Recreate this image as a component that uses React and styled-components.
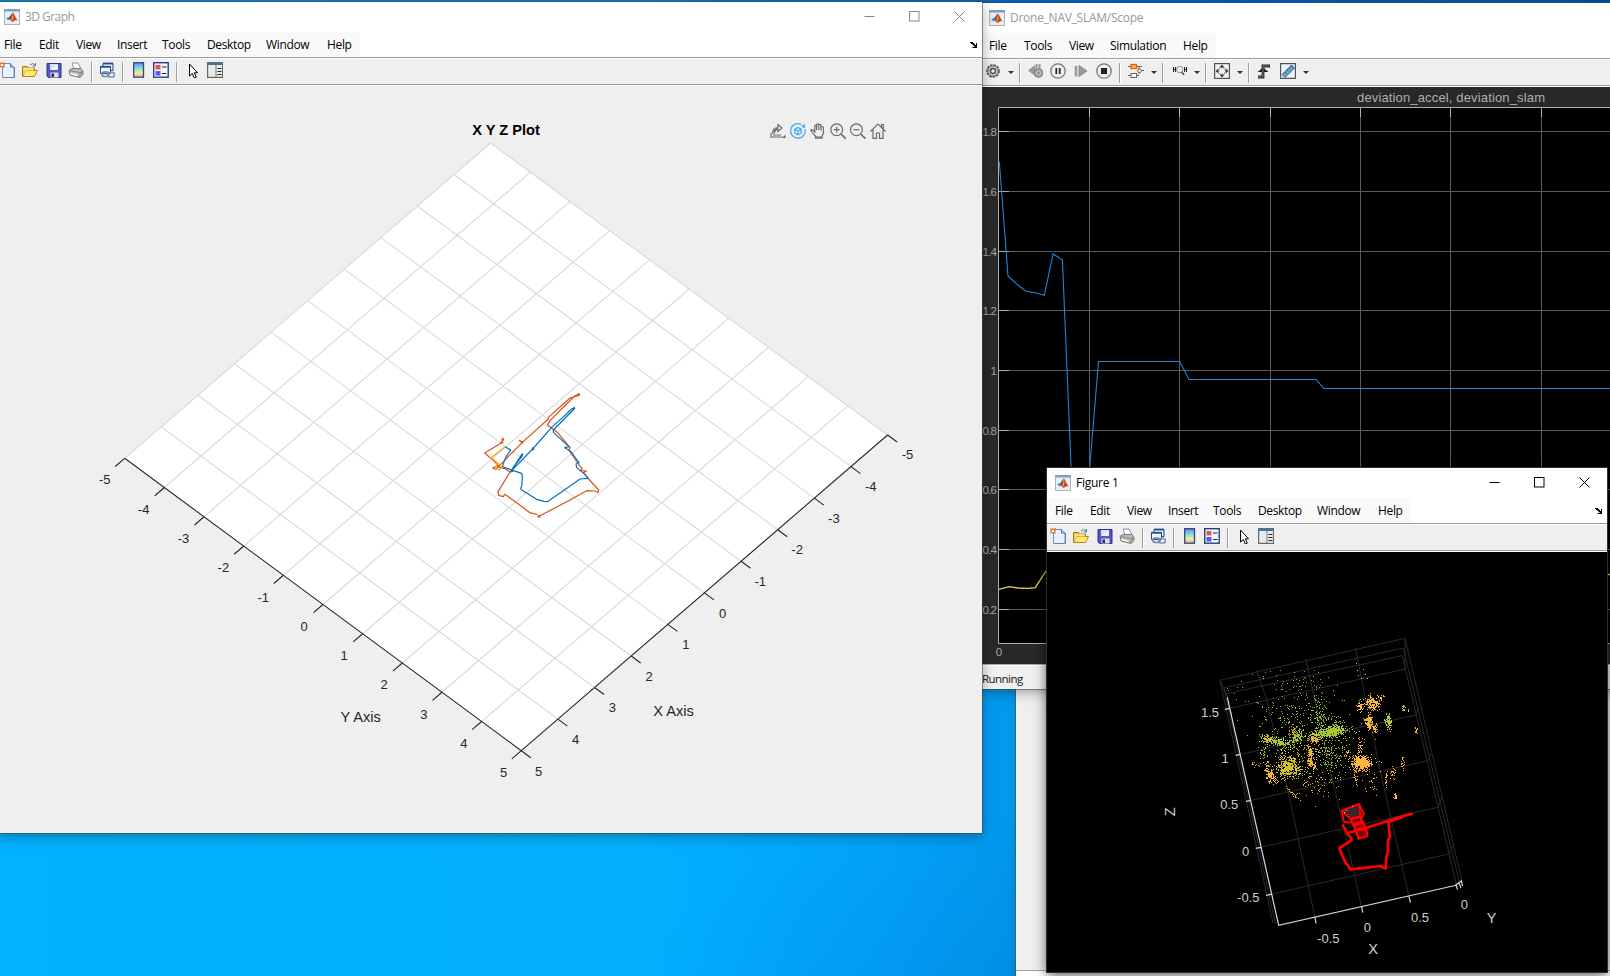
import React from "react";
import styled, { createGlobalStyle } from "styled-components";

const GlobalStyle = createGlobalStyle`
  html, body { margin: 0; padding: 0; overflow: hidden; }
  * { box-sizing: border-box; }
  svg { display: block; }
`;

const UI_FONT = `"Open Sans", "Noto Sans", sans-serif`;
const PLOT_FONT = `"Liberation Sans", Arial, sans-serif`;

/* ---------- desktop and windows ---------- */

const Desktop = styled.main`
  position: relative;
  width: 1610px;
  height: 976px;
  overflow: hidden;
  font-family: ${UI_FONT};
  background: linear-gradient(90deg, #008fdc 0, #0084d4 600px, #0068c4 1000px, #0054b0 100%) 0 0 / 100% 4px no-repeat,
    linear-gradient(166deg, transparent 91%, rgba(0, 120, 215, 0.1) 91.3%, transparent 97%),
    radial-gradient(ellipse 380px 200px at 1010px 1010px, rgba(0, 118, 214, 0.32), transparent),
    linear-gradient(90deg, #02b2ff 0, #02b0fe 40%, #02a3f8 55%, #0297ec 64%, #0290e6 100%);
`;

const Frame = styled.section`
  position: absolute;
  left: ${(p) => p.$x}px;
  top: ${(p) => p.$y}px;
  width: ${(p) => p.$w}px;
  height: ${(p) => p.$h}px;
  display: flex;
  flex-direction: column;
  background: #efefef;
  box-shadow: 0 0 0 1px ${(p) => p.$edge || "rgba(70,70,70,0.55)"}, 0 3px 12px rgba(0, 0, 0, ${(p) => p.$shadow ?? 0.35});
`;

const TitleBar = styled.header`
  height: 30px;
  flex: none;
  display: flex;
  align-items: center;
  background: #fff;
  padding-left: 8px;
`;

const TitleText = styled.h1`
  margin: 0 0 0 5px;
  padding-bottom: 1px;
  flex: 1;
  font-size: 12px;
  line-height: 16px;
  font-weight: 400;
  letter-spacing: ${(p) => p.$track || "-0.25px"};
  color: ${(p) => (p.$active ? "#000" : "#999")};
`;

const Caption = styled.button`
  width: 45.2px;
  height: 30px;
  padding: 0 0 2px;
  border: 0;
  background: none;
  display: flex;
  align-items: center;
  justify-content: center;
  color: ${(p) => (p.$active ? "#000" : "#888")};
`;

const MenuRow = styled.nav`
  height: 25px;
  flex: none;
  display: flex;
  justify-content: space-between;
  align-items: center;
  background: #fff;
  padding-right: 4px;
`;

const MenuGroup = styled.div`
  height: 25px;
  width: ${(p) => p.$w}px;
  display: flex;
  align-items: center;
  padding-left: 8px;
  background: #f9f9f9;
`;

const MenuItem = styled.span`
  width: ${(p) => p.$w}px;
  flex: none;
  font-size: 12px;
  line-height: 16px;
  letter-spacing: -0.35px;
  color: #000;
  white-space: nowrap;
`;

const ToolRow = styled.div`
  height: 29px;
  flex: none;
  display: flex;
  align-items: center;
  background: #efefef;
  border-top: 1px solid #9b9b9b;
  border-bottom: 1px solid #fff;
  box-shadow: inset 0 1px #fff, inset 0 -1px #9b9b9b;
`;

const Tool = styled.span`
  width: ${(p) => p.$w || 16}px;
  height: 16px;
  margin-left: ${(p) => p.$gap}px;
  margin-bottom: 3px;
  flex: none;
`;

const Divider = styled.span`
  width: 1px;
  height: 20px;
  margin-left: ${(p) => p.$gap}px;
  flex: none;
  background: #9c9c9c;
  box-shadow: 1px 0 #fff;
`;

const Caret = styled.span`
  width: 6px;
  height: 0;
  flex: none;
  margin-left: ${(p) => p.$gap}px;
  margin-bottom: 1px;
  border: 3px solid transparent;
  border-top: 3px solid #333;
  border-bottom: 0;
`;

const Canvas = styled.div`
  flex: 1;
  min-height: 0;
  overflow: hidden;
  background: ${(p) => p.$bg};
`;

const StatusBar = styled.footer`
  height: 25px;
  flex: none;
  display: flex;
  align-items: center;
  padding: 2px 0 0 1px;
  background: #f0f0f0;
  border-top: 1px solid #aaa;
  box-shadow: inset 0 1px #fff;
  font-size: 11.5px;
  letter-spacing: -0.55px;
  color: #111;
`;

const BackFooter = styled.footer`
  margin-top: auto;
  height: 6px;
  border-top: 1px solid #a0a0a0;
  background: #fff;
`;

const PlotText = styled.text`
  font-family: ${PLOT_FONT};
  font-size: ${(p) => p.$size || 13}px;
  font-weight: ${(p) => p.$weight || 400};
  fill: ${(p) => p.$color || "#262626"};
  text-anchor: ${(p) => p.$anchor || "middle"};
`;

/* ---------- icons ---------- */

const MatlabLogo = () => (
  <svg width="16" height="16" viewBox="0 0 16 16">
    <rect x=".5" y=".5" width="15" height="15" fill="#e9eef3" stroke="#a9b4be" />
    <rect x="0" y="0" width="16" height="2.5" fill="#7f9fbd" />
    <path d="M2 9.400 5.200 8l1.600 1.600L4.900 11.300Z" fill="#3b7fb5" />
    <path d="M5.200 8C6.800 7.200 7.500 4.200 8.800 3.600L6.800 9.900Z" fill="#294f73" />
    <path d="M8.800 3.600c1 .2 2.600 5 4.800 8-1.300-.9-2.200-.8-3 .2L8 13C7.600 12 7 11.400 5.600 11 7.400 9.500 8 6 8.800 3.600Z" fill="#c8441a" />
    <path d="M8.800 4 9.600 8 8 12.700 7.300 11C8.300 9 8.400 6 8.800 4Z" fill="#f5a33a" />
  </svg>
);

const MinIcon = () => (<svg width="11" height="11"><path d="M.5 5.500H10.500" stroke="currentColor" /></svg>);
const MaxIcon = () => (<svg width="11" height="11"><rect x=".5" y=".5" width="9.500" height="9.500" fill="none" stroke="currentColor" /></svg>);
const CloseIcon = () => (<svg width="11" height="11"><path d="M.5.5 10.500 10.500M10.500.5.5 10.500" stroke="currentColor" /></svg>);
const DockIcon = () => (
  <svg width="8" height="6" viewBox="0 0 8 6">
    <path d="M0 0h3v1h1v1h1v1h1V1h1v5H2.500V5h2V4h-1V3h-1V2H1V1H0Z" fill="#000" />
  </svg>
);

const icons = {
  create: (
    <>
      <path d="M3.500 1.500h8l3.500 3.500v10.500H3.500Z" fill="#e8f2ff" stroke="#6f8fc4" />
      <path d="M11.500 1.500V5H15" fill="#b7d2f2" stroke="#4d6ea8" />
      <path d="M15.500 5v10.700H4" fill="none" stroke="#6b80a3" />
      <circle cx="3" cy="3" r="2" fill="#fff" stroke="#e17033" strokeWidth="1.300" />
      <path d="M.5.5l1 1M5.500.5l-1 1M.5 5.500l1-1M4.500 4.500l1 1" stroke="#c94e1c" />
    </>
  ),
  open: (
    <>
      <path d="M.5 14.500V4.500h5l1 1.500h6v3" fill="#e8bf35" stroke="#a97c12" />
      <path d="M.8 14.500 3.500 8.500h12L12.500 14.500Z" fill="#ffe873" stroke="#b58918" />
      <path d="M1.500 14V6h10v2.500h-8Z" fill="#fbe37a" />
      <path d="M8 3q3-3 5 0M13.500 1v3h-3" fill="none" stroke="#5879a8" />
    </>
  ),
  save: (
    <>
      <path d="M1 1.500h14v14H2.500L1 14Z" fill="#5557c4" stroke="#30318c" />
      <rect x="4" y="2" width="8" height="6" fill="#d4def8" />
      <path d="M4 7.500 12 2.500v5Z" fill="#f4f7ff" />
      <rect x="4.500" y="10.500" width="8" height="5" fill="#dcdcec" />
      <rect x="5.500" y="11.500" width="2.500" height="3.500" fill="#29296b" />
    </>
  ),
  print: (
    <>
      <path d="M4 1h6l3 6H6Z" fill="#fff" stroke="#8394ae" />
      <path d="M1 8.500 4 6.500h9l2 3v3L12 15.500 2 13Z" fill="#bcbcb6" stroke="#7b7b74" />
      <path d="M1 8.500 12 10.500l3-1.500M12 10.500v5" fill="none" stroke="#888" />
      <path d="M2.500 11.500 9.500 13.500" stroke="#fff" strokeWidth="1.500" />
      <rect x="12.800" y="10.500" width="1.500" height="1.500" fill="#4aa34a" />
    </>
  ),
  link: (
    <>
      <path d="M4 1.500h10v7H4Z" fill="#dceafa" stroke="#234a86" />
      <path d="M4 1.500h10" stroke="#234a86" strokeWidth="1.800" />
      <path d="M1.500 4.500h10v7h-10Z" fill="#eff6ff" stroke="#234a86" />
      <path d="M1.500 4.800h10" stroke="#234a86" strokeWidth="1.800" />
      <rect x="3" y="10" width="7" height="4.500" rx="2.200" fill="none" stroke="#6b84a8" strokeWidth="1.600" />
      <rect x="8.500" y="10.500" width="7" height="4.500" rx="2.200" fill="none" stroke="#7b91b3" strokeWidth="1.600" />
    </>
  ),
  colorbar: (
    <>
      <defs>
        <linearGradient id="jet" x2="0" y2="1">
          <stop offset="0" stopColor="#7c7de0" /><stop offset=".35" stopColor="#7ad9e8" />
          <stop offset=".7" stopColor="#f1ee9a" /><stop offset="1" stopColor="#f4a98a" />
        </linearGradient>
      </defs>
      <rect x="2.700" y=".7" width="9.800" height="14.500" fill="url(#jet)" stroke="#294985" strokeWidth="1.300" />
    </>
  ),
  legend: (
    <>
      <rect x=".7" y=".7" width="14.500" height="14.500" fill="#f5f8ff" stroke="#24427c" strokeWidth="1.400" />
      <rect x="2.500" y="3" width="5" height="4.500" fill="#e25757" />
      <rect x="2.500" y="9" width="5" height="4.500" fill="#5b5be2" />
      <path d="M9 5h4.500M9 11.500h4.500" stroke="#222" strokeWidth="1.200" />
    </>
  ),
  pointer: <path d="M4.500 2v12l2.800-2.500 2 4.500 2-.9-2-4.300h3.200Z" fill="#fff" stroke="#000" />,
  inspector: (
    <>
      <rect x=".6" y=".6" width="15" height="14.800" fill="#e9e9e9" stroke="#666" strokeWidth="1.200" />
      <path d="M0 1.500h16" stroke="#4b7390" strokeWidth="3" />
      <path d="M9 3v12.500" stroke="#777" />
      <path d="M10.500 6.500h4M10.500 9.500h4M10.500 12.500h4" stroke="#222" strokeWidth="1.200" />
    </>
  ),
  gear: (
    <>
      <circle cx="8" cy="8" r="6" fill="#bbb" stroke="#555" strokeWidth="1.600" strokeDasharray="2.500 1" />
      <circle cx="8" cy="8" r="5" fill="#d4d4d4" stroke="#666" strokeWidth=".8" />
      <circle cx="8" cy="8" r="2.500" fill="#f5f5f5" stroke="#444" strokeWidth="1.300" />
    </>
  ),
  stepBack: (
    <>
      <path d="M0 7.500 7 2v11Z" fill="#999" />
      <path d="M8.500 1v6M11.500 1v5" stroke="#999" strokeWidth="2" />
      <circle cx="10.500" cy="10" r="3.800" fill="#c4c4c4" stroke="#8c8c8c" strokeWidth="2" />
      <circle cx="10.500" cy="10" r="1.400" fill="#8c8c8c" />
    </>
  ),
  pause: (
    <>
      <circle cx="8" cy="8" r="7.200" fill="#eee" stroke="#777" strokeWidth="1.300" />
      <path d="M6.300 5v6M9.700 5v6" stroke="#222" strokeWidth="1.700" />
    </>
  ),
  stepForward: (
    <>
      <path d="M3 3v10.500" stroke="#999" strokeWidth="2.600" />
      <path d="M6 2.500 14 8 6 13.500Z" fill="#999" stroke="#8c8c8c" />
    </>
  ),
  stop: (
    <>
      <circle cx="8" cy="8" r="7.200" fill="#eee" stroke="#777" strokeWidth="1.300" />
      <rect x="5" y="5" width="6" height="6" fill="#222" />
    </>
  ),
  blocks: (
    <>
      <path d="M0 3.500h14M11 3.500v8M0 12.500h11M9 7.500h7" fill="none" stroke="#666" />
      <rect x="3" y="1.500" width="5.500" height="4" fill="#ffb36a" stroke="#d8650e" strokeWidth="1.300" />
      <rect x="3" y="10.500" width="5.500" height="4" fill="#fff" stroke="#666" />
      <circle cx="11.500" cy="7.800" r="1.900" fill="#fff" stroke="#666" />
    </>
  ),
  zoomX: (
    <>
      <path d="M1.500 4v5M3.500 4v5M12.500 4v5M14.500 4v5M1.500 6.500h2M12.500 6.500h2" stroke="#222" />
      <circle cx="7.700" cy="6.500" r="3.200" fill="#eef5f8" stroke="#8a8a8a" />
      <path d="M9.700 9l2.300 3" stroke="#555" strokeWidth="1.600" />
    </>
  ),
  fit: (
    <>
      <rect x=".6" y=".6" width="14.800" height="14.800" fill="#f2f2f2" stroke="#555" strokeWidth="1.200" />
      <path d="M8 1.500 5.500 4.500h5ZM8 14.500l-2.500-3h5ZM1.500 8l3-2.500v5ZM14.500 8l-3-2.500v5Z" fill="#333" />
      <rect x="5" y="5" width="6" height="6" fill="none" stroke="#777" strokeDasharray="1 1" />
    </>
  ),
  trigger: (
    <>
      <path d="M2 14h5V3H14" fill="none" stroke="#222" strokeWidth="2.800" />
      <path d="M1.500 9 7 4.500 12.500 9Z" fill="#222" />
      <path d="M2 14h5V3H13" fill="none" stroke="#999" strokeWidth=".7" />
    </>
  ),
  measure: (
    <>
      <path d="M.6 15.400V.6h14.800v14.800Z" fill="#f2f6f9" stroke="#555" strokeWidth="1.200" />
      <path d="M2 11.500 11.500 2l3 3L5 14.500Z" fill="#6ca6d2" stroke="#26628d" />
      <path d="m5 9 1.500 1.500M7 7l1.500 1.500M9 5l1.500 1.500M11 3l1.500 1.500" stroke="#164c75" strokeWidth=".8" />
    </>
  ),
};

const Glyph = ({ name, w = 16 }) => (
  <svg width={w} height="16" viewBox={`0 0 ${w} 16`}>{icons[name]}</svg>
);

const figureTools = [
  ["create", 3], ["open", 7], ["save", 8], ["print", 6], ["|", 7], ["link", 7], ["|", 7],
  ["colorbar", 8], ["legend", 6], ["|", 7], ["pointer", 8], ["inspector", 6],
];
const scopeTools = [
  ["gear", 4], ["v", 7], ["|", 5], ["stepBack", 8], ["pause", 6], ["stepForward", 7], ["stop", 7], ["|", 7],
  ["blocks", 8], ["v", 7], ["|", 5], ["zoomX", 9, 17], ["v", 5], ["|", 5], ["fit", 8], ["v", 7], ["|", 5],
  ["trigger", 7], ["measure", 8], ["v", 7],
];
const figureMenu = [["File", 35], ["Edit", 37], ["View", 41], ["Insert", 45], ["Tools", 45], ["Desktop", 59], ["Window", 61], ["Help", 30]];
const scopeMenu = [["File", 35], ["Tools", 45], ["View", 41], ["Simulation", 73], ["Help", 30]];

const ToolBar = ({ items }) => (
  <ToolRow>
    {items.map(([name, gap, w], i) => {
      if (name === "|") return <Divider key={i} $gap={gap} />;
      if (name === "v") return <Caret key={i} $gap={gap} />;
      return <Tool key={i} $gap={gap} $w={w}><Glyph name={name} w={w} /></Tool>;
    })}
  </ToolRow>
);

const AppWindow = ({ title, track, active, rect, edge, shadow, menu, menuWidth, tools, controls = true, children }) => (
  <Frame $x={rect[0]} $y={rect[1]} $w={rect[2]} $h={rect[3]} $edge={edge} $shadow={shadow}>
    <TitleBar>
      <MatlabLogo />
      <TitleText $active={active} $track={track}>{title}</TitleText>
      {controls && (
        <>
          <Caption $active={active}><MinIcon /></Caption>
          <Caption $active={active}><MaxIcon /></Caption>
          <Caption $active={active}><CloseIcon /></Caption>
        </>
      )}
    </TitleBar>
    <MenuRow>
      <MenuGroup $w={menuWidth}>
        {menu.map(([label, w]) => <MenuItem key={label} $w={w}>{label}</MenuItem>)}
      </MenuGroup>
      {controls && <DockIcon />}
    </MenuRow>
    <ToolBar items={tools} />
    {children}
  </Frame>
);

/* ---------- XYZ plot ---------- */

const L = [124.7, 458.3], B = [521.3, 750.7], T = [490.6, 143], R = [887.6, 435];
const mix = (a, b, t) => [a[0] + (b[0] - a[0]) * t, a[1] + (b[1] - a[1]) * t];
const seg = (a, b) => `M${a[0]} ${a[1]}L${b[0]} ${b[1]}`;
const steps = Array.from({ length: 11 }, (_, i) => i);
const inner = steps.slice(1, 10);

const XyzPlot = () => (
  <svg width="986" height="747" viewBox="-4 86 986 747">
    <polygon points={[L, B, R, T].map((p) => p.join()).join(" ")} fill="#fff" />
    <path
      d={inner.map((i) => seg(mix(L, B, i / 10), mix(T, R, i / 10)) + seg(mix(L, T, i / 10), mix(B, R, i / 10))).join("")
        + seg(L, T) + seg(T, R)}
      stroke="#d9d9d9" strokeWidth="1.100" fill="none"
    />
    <path
      d={seg(L, B) + seg(B, R)
        + steps.map((i) => {
          const p = mix(L, B, i / 10), q = mix(B, R, i / 10);
          return seg(p, [p[0] - 9.500, p[1] + 8.200]) + seg(q, [q[0] + 9.500, q[1] + 7]);
        }).join("")}
      stroke="#262626" strokeWidth="1.100" fill="none"
    />
    {steps.map((i) => {
      const y = mix([104.700, 484.400], [503.700, 777.200], i / 10);
      const x = mix([538.700, 775.800], [906.700, 459.200], i / 10);
      return (
        <g key={i}>
          <PlotText x={i > 0 && i < 5 ? y[0] - 1 : y[0]} y={y[1]}>{i - 5}</PlotText>
          <PlotText x={i > 5 ? x[0] + 0.8 : x[0]} y={x[1]}>{5 - i}</PlotText>
        </g>
      );
    })}
    <PlotText x="506" y="135" $size={14.600} $weight={700} $color="#000">X Y Z Plot</PlotText>
    <PlotText x="360.700" y="722.300" $size={14.600}>Y Axis</PlotText>
    <PlotText x="673.600" y="716" $size={14.600}>X Axis</PlotText>
    <g transform="translate(470 380) scale(.33333)" fill="none" strokeWidth="3.600" strokeLinejoin="round">
      <path stroke="#d95319" d="M330 42 325 41 328 46 300 54 270 81 235 112 235 117 157 187 148 181 155 188M157 183 158 190M157 187 77 268 68 264 82 258 94 266M97 173l4 5-3 5-3-6M97 180 95 188 44 219 66 238 92 263 105 266 120 276 84 335 86 346 100 350 104 343 111 347 150 376 180 398 202 404M203 411 210 411 207 406 203 411 300 360 350 332 375 333 384 337 386 330 364 306 340 278 350 273 330 272 337 266 327 255 296 210 300 203 265 160 240 140 232 136 240 122 290 72 315 47 330 42M90 188h10" />
      <path stroke="#0072bd" d="M315 82 305 87 275 115 247 140 188 207 122 275 157 221V228L130 262 122 274M185 203l6 5-4 3M315 84 250 150V157L297 200 284 203 300 212 327 248 318 252 320 262 345 284 355 295 330 297 280 332 232 365 222 364 200 358 154 329 152 325 155 320 157 290 155 280 130 272 97 260 107 232 122 210 105 200M120 268l8 6-8 2" />
      <path stroke="#edb120" d="M105 200 65 232 97 262 88 269 75 267 82 250M60 232l8 5" />
    </g>
    <AxesTools />
  </svg>
);

const AxesTools = () => (
  <g fill="none" stroke="#6b6b6b" strokeWidth="1.200">
    <g transform="translate(770 123)">
      <path d="M2.500 10Q3 4.500 8 4.500V1.500L12 5 8 8.500V6.500Q5 6.500 4.500 10ZM4 9Q5 5.500 8.500 5.500" />
      <path d="M1 10v4h11.500M3 12h8" />
      <path d="M15.500 11.500v3.500h-3.500Z" fill="#6b6b6b" stroke="none" />
    </g>
    <g transform="translate(790 123)" stroke="#3ba9f5">
      <path d="M11.500 1.500A7.300 7.300 0 1 0 15 6" />
      <path d="M11 3.800 15 .8V5Z" fill="#3ba9f5" stroke="none" />
      <path d="M8 4.500 11.200 6.200V10L8 11.800 4.800 10V6.200ZM4.800 6.200 8 8l3.200-1.800M8 8v3.800" />
    </g>
    <g transform="translate(810 123)">
      <path d="M5.500 15.200v-2L1 7.800Q.6 6.300 2.400 6.800L4.800 9V2.800Q5.600 1.300 6.600 2.800V7 1.500Q7.600 0 8.800 1.500V7 2Q10 .8 11 2.200V7.500 4.200Q12.200 2.800 13.300 4.200V10.500L12 13.200v2Z" />
      <path d="M5.500 14h6.500" />
    </g>
    {[830, 849.700].map((x, i) => (
      <g key={x} transform={`translate(${x} 123)`}>
        <circle cx="6.700" cy="6.700" r="5.900" />
        <path d={i ? "M3.700 6.700h6" : "M3.700 6.700h6M6.700 3.700v6"} />
        <path d="M11 11l4.700 4.700" strokeWidth="1.700" />
      </g>
    ))}
    <g transform="translate(870 123)">
      <path d="M.5 8.500 8 1l7.500 7.500M3 7v8.300h3.500V10h3v5.300H13V7M11.500 4V1.500h1.800v4.300" />
    </g>
  </g>
);

/* ---------- scope plot ---------- */

const scopeRows = [[131.5, "1.8"], [191.5, "1.6"], [251.5, "1.4"], [310.5, "1.2"], [370.5, "1"], [430.5, "0.8"], [489.5, "0.6"], [549.5, "0.4"], [609.5, "0.2"]];
const scopeCols = [1089.5, 1179.5, 1270.5, 1360.5, 1450.5, 1541.5];

const ScopePlot = () => (
  <svg width="640" height="577" viewBox="981 87 640 577">
    <rect x="998" y="107" width="640" height="537" fill="#000" />
    <path d={scopeRows.map(([y]) => `M999 ${y}H1621`).join("") + scopeCols.map((x) => `M${x} 107V643`).join("")} stroke="#5a5a5a" />
    <path
      d={"M998.500 643.500V107.500H1621M998.500 643.500H1621" + scopeRows.map(([y]) => `M999 ${y}H1009`).join("") + scopeCols.map((x) => `M${x} 107V117`).join("")}
      stroke="#afafaf" fill="none"
    />
    {scopeRows.map(([y, label]) => (
      <PlotText key={label} x="997" y={y + 4} $size={11.500} $color="#a6a6a6" $anchor="end" textLength={label === "1" ? 5 : 14.500}>{label}</PlotText>
    ))}
    <PlotText x="999" y="656" $size={11.500} $color="#a6a6a6">0</PlotText>
    <PlotText x="1357" y="101.800" $size={13} $color="#afafaf" $anchor="start" textLength="188">deviation_accel, deviation_slam</PlotText>
    <path
      d="M999.300 161.700 1008 276 1017 284.300 1025.800 291.300 1035 292.700 1044.300 295.300 1053.100 254 1062.400 259.700 1071.200 470M1089.500 470 1098.500 361.500H1179.700L1189 379.500H1315.900L1324 388.500H1621"
      stroke="#1f86d8" fill="none" strokeWidth="1.100"
    />
    <path d="M999 589.300 1009 586.700 1018 588 1028 588.300 1035.300 587.700 1047.300 569M1600 574.500H1621" stroke="#e3d24a" fill="none" strokeWidth="1.300" />
  </svg>
);

/* ---------- point cloud ---------- */

const makeRandom = (seed) => () => {
  seed = (seed * 1664525 + 1013904223) % 4294967296;
  return seed / 4294967296;
};

/* centre x, centre y, spread x, spread y, slope, count, colour */
const clusters = [
  [1331, 731, 7.500, 2.400, -0.12, 420, "#a9c935"],
  [1316, 735, 5, 2.500, -0.1, 80, "#a9c935"],
  [1296, 737, 3.500, 3.500, 0, 100, "#a9c935"],
  [1280, 742, 7, 2.200, 0.2, 150, "#a9c935"],
  [1267, 739, 4.500, 2.500, 0.2, 90, "#c9c032"],
  [1288, 766, 5.500, 5, 0, 360, "#cfc02d"],
  [1288, 767, 9, 6, 0, 110, "#cfc02d"],
  [1270, 775, 2, 3.500, 0, 85, "#f0b737"],
  [1266, 766, 1.500, 3, 0, 25, "#f0b737"],
  [1275, 780, 3.500, 1.500, 0.3, 20, "#f0b737"],
  [1310, 756, 1.500, 4.500, 0.1, 70, "#eeb337"],
  [1311, 764, 2, 2.500, 0.2, 50, "#eeb337"],
  [1314, 738, 2.500, 2.500, 0, 60, "#eeb337"],
  [1361, 763, 4, 3.500, 0, 360, "#ffb83c"],
  [1361, 762, 7, 4, 0, 90, "#ffb83c"],
  [1360, 748, 1.700, 5, 0.3, 28, "#ffb83c"],
  [1355, 778, 1, 4, 0, 22, "#ffb83c"],
  [1347, 753, 2, 3, 0.3, 16, "#ffb83c"],
  [1372, 703, 3.800, 4, 0, 150, "#f9bc3c"],
  [1360, 706, 2, 3.800, 0, 50, "#f9bc3c"],
  [1380, 699, 2.200, 1.200, -1, 14, "#f9bc3c"],
  [1369, 722, 2, 3, 0, 140, "#f0b73a"],
  [1375, 728, 1.200, 2, 0, 32, "#f0b73a"],
  [1388, 721, 1.600, 3.600, 0, 90, "#bdc836"],
  [1403, 708, 0.800, 1.700, 0, 14, "#bdc836"],
  [1408, 710, 0.300, 1.500, 0, 6, "#ffb83c"],
  [1416, 730, 0.800, 1.500, 0.2, 14, "#ffb83c"],
  [1393, 773, 1.300, 2.500, 0, 24, "#ffb83c"],
  [1402, 763, 1, 3.500, -0.8, 18, "#ffb83c"],
  [1386, 778, 0.500, 4, 0, 18, "#ffb83c"],
  [1395, 795, 1, 1.500, 0, 16, "#ffb83c"],
  [1373, 781, 4, 5, 0, 22, "#ffb83c"],
  [1293, 794, 4, 1, 0.9, 18, "#e8b235"],
  [1315, 786, 12, 8, 0, 60, "#e2b436"],
  [1322, 769, 12, 5, 0, 45, "#c4c035"],
  [1330, 750, 9, 9, 0, 150, "#a5bf34"],
  [1318, 715, 3, 9, 0.2, 70, "#93bd38"],
  [1333, 723, 6, 5, 0, 60, "#93bd38"],
  [1298, 708, 21, 12, 0, 110, "#8ab53a"],
  [1292, 724, 18, 9, 0, 80, "#8ab53a"],
  [1300, 683, 18, 7, 0, 45, "#78ad42"],
  [1245, 695, 12, 12, 0, 12, "#8ab53a"],
  [1294, 730, 3.500, 3.500, 0, 36, "#dfb436"],
  [1262, 753, 3, 4, 0.2, 26, "#a9bf34"],
  [1254, 764, 2.500, 1.500, 0.5, 13, "#e2b436"],
  [1298, 750, 13, 5, 0, 70, "#ccb934"],
  [1361, 728, 8, 12, 0, 18, "#f0b73a"],
  [1362, 672, 4, 6, 0, 7, "#f0b73a"],
  [1300, 700, 26, 16, 0, 12, "#f0b73a"],
];

const cloud = (() => {
  const rnd = makeRandom(77);
  const gauss = () => (rnd() + rnd() + rnd() + rnd() - 2) * 1.700;
  return clusters.map(([cx, cy, sx, sy, k, n, color]) => {
    let d = "";
    for (let i = 0; i < n; i += 1) {
      const dx = gauss() * sx, dy = gauss() * sy;
      d += `M${Math.round(cx + dx)} ${Math.round(cy + dy + dx * k)}h1v1h-1z`;
    }
    return { color, d };
  });
})();

const cubeGrid =
  "M1220 680.300 1405 638.300M1224 687.700 1403.300 648M1226 693.700 1402.300 655.700M1230 708.300 1405 669M1240.700 754.300 1415.700 715M1251 800.300 1428 760.700M1260.700 847.300 1438.300 807.300M1271 894.300 1448.300 854" +
  "M1220 680.300 1273 923M1224 687.700 1275.500 924M1226 693.700 1228 698M1405 638.300 1461.700 880M1403.300 648 1459.500 883M1402.300 655.700 1456.700 886M1405 638.300V669" +
  "M1256.700 670 1266.700 700 1288.300 792.700 1315 917.300M1305.700 659 1315.700 703 1333.300 783 1361.700 906.700M1355.700 648 1361.700 680 1380 770 1409 896.700" +
  "M1220 680.300 1226 693.700M1415.700 715 1419 707M1428 760.700 1431 753M1438.300 807.300 1442 796M1448.300 854 1454 845";

const CloudPlot = () => (
  <svg width="560" height="420" viewBox="1047 552 560 420">
    <path d={cubeGrid} stroke="#2b2b2b" fill="none" />
    {cloud.map((c, i) => <path key={i} d={c.d} fill={c.color} shapeRendering="crispEdges" />)}
    <path
      d="M1227.300 697.300 1278.700 925.300 1455 885.500M1230 708.300l-5 1M1240.700 754.300l-5 1M1251 800.300l-5 1M1260.700 847.300l-5 1M1271 894.300l-5 1M1315 917.300l1 6M1361.700 906.700l1 6M1409 896.700l1.500 6M1455 885.500 1462 880.500M1456 885l1.500 4.500M1459 883l2 5M1461.500 881l1 5"
      stroke="#d9d9d9" fill="none" strokeWidth="1.200"
    />
    <g transform="translate(1140 780) scale(.33333)" stroke="#f00" strokeLinejoin="round" fill="none">
      <path strokeWidth="8" d="M818 101 790 108 745 122 665 148 620 160 632 172 635 181 598 204 606 225 617 248 632 268 680 263 722 258 737 266 739 232 744 215V180L750 172 745 122M607 133 620 155M745 126 790 110" />
      <path d="M605 92 657 72 662 108 632 117Z" fill="#3a252c" strokeWidth="6" />
      <path d="M605 92 612 125 632 128 662 118 672 102 657 72" strokeWidth="6" />
      <path d="M632 118 660 110 668 128 642 138ZM642 132 668 124 676 142 646 150ZM648 150 679 148 682 168 655 176Z" fill="#7a0008" strokeWidth="7" />
    </g>
    <path d="M1346 810h1v1h-1zM1344 812h1v1h-1zM1352 806h1v1h-1z" fill="#ffb83c" />
    {[["1.5", 1210, 717.400], ["1", 1225, 763.400], ["0.5", 1229.300, 809], ["0", 1245.700, 856], ["-0.5", 1248.300, 902.400],
      ["-0.5", 1328.300, 943.400], ["0", 1367.300, 932], ["0.5", 1420, 922.400], ["0", 1464.300, 909.400]].map(([t, x, y], i) => (
      <PlotText key={i} x={x} y={y} $color="#cfcfcf">{t}</PlotText>
    ))}
    <PlotText x="1373" y="954.300" $size={14.600} $color="#cfcfcf">X</PlotText>
    <PlotText x="1491.700" y="922.600" $size={14.600} $color="#cfcfcf">Y</PlotText>
    <PlotText transform="translate(1175 811.700) rotate(-90)" $size={14.600} $color="#cfcfcf">Z</PlotText>
  </svg>
);

export default function App() {
  return (
    <>
      <GlobalStyle />
      <Desktop>
        <Frame $x={1016} $y={660} $w={620} $h={316} $shadow={0.1}>
          <BackFooter />
        </Frame>
        <AppWindow
          title="Drone_NAV_SLAM/Scope" track="-0.26px" rect={[981, 3, 640, 686]} menu={scopeMenu} menuWidth={235}
          tools={scopeTools} controls={false}
        >
          <Canvas $bg="#282828"><ScopePlot /></Canvas>
          <StatusBar>Running</StatusBar>
        </AppWindow>
        <AppWindow
          title="3D Graph" track="-0.55px" rect={[-4, 2, 986, 831]} menu={figureMenu} menuWidth={364} tools={figureTools}
        >
          <Canvas $bg="#efefef"><XyzPlot /></Canvas>
        </AppWindow>
        <AppWindow
          title="Figure 1" active rect={[1047, 468, 560, 504]} edge="#2e2e2e" shadow={0.7} menu={figureMenu} menuWidth={364} tools={figureTools}
        >
          <Canvas $bg="#000"><CloudPlot /></Canvas>
        </AppWindow>
      </Desktop>
    </>
  );
}
